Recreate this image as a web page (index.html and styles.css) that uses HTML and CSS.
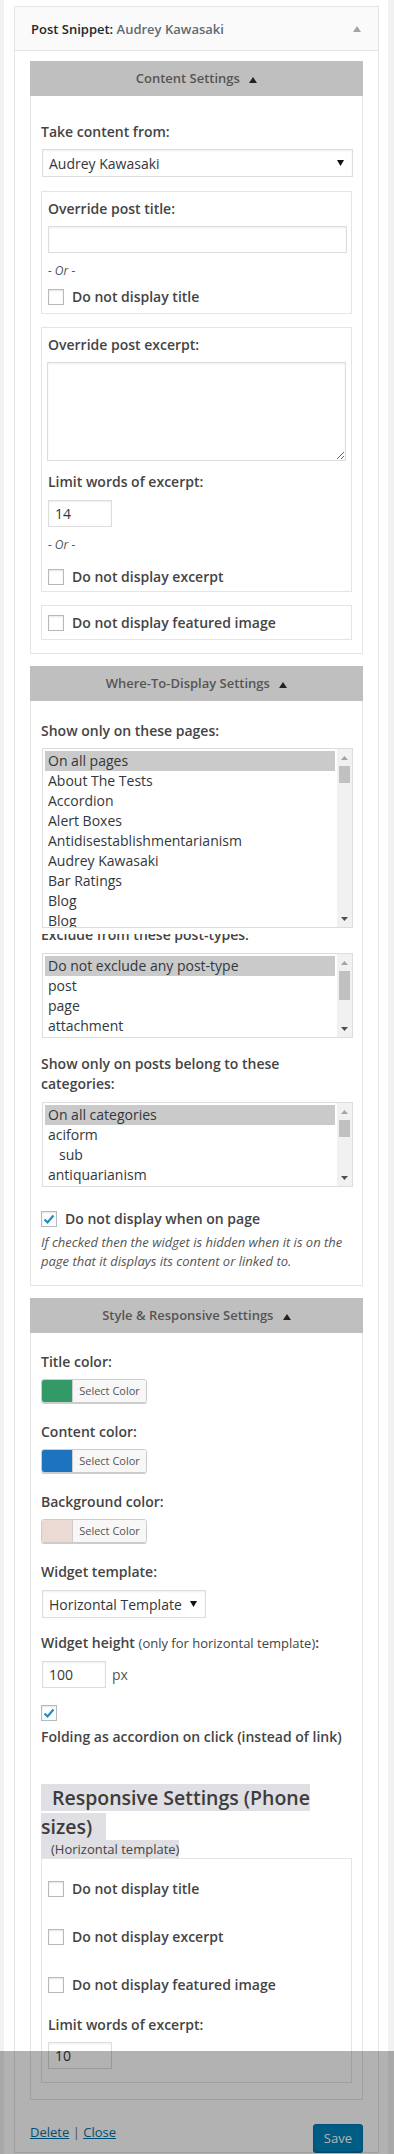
FILE: index.html
```html
<!DOCTYPE html>
<html lang="en">
<head>
    <meta charset="UTF-8">
    <meta name="viewport" content="width=device-width, initial-scale=1.0">
    <title>Post Snippet widget</title>
    <link rel="stylesheet" href="styles.css">
</head>
<body>

<div class="sidebar">
    <div class="widget">
        <div class="widget-top">
            <h3 class="widget-title">Post Snippet: <span class="in-title">Audrey Kawasaki</span></h3>
            <svg class="toggle" width="8" height="6" viewBox="0 0 8 6"><path d="M4 0 L8 6 L0 6 Z"/></svg>
        </div>

        <div class="widget-inside">

            <!-- content settings -->
            <div class="section">
                <div class="section-head">Content Settings <svg class="head-arrow" width="8" height="6" viewBox="0 0 8 6"><path d="M4 0 L8 6 L0 6 Z"/></svg></div>
                <div class="section-body content-body">
                    <label class="lbl">Take content from:</label>
                    <div class="dropdown dropdown-full">
                        <span>Audrey Kawasaki</span>
                        <svg width="7" height="6" viewBox="0 0 7 6"><path d="M0 0 L7 0 L3.5 6 Z"/></svg>
                    </div>

                    <div class="box box-title">
                        <label class="lbl">Override post title:</label>
                        <input type="text" class="txt txt-wide">
                        <div class="or">- Or -</div>
                        <div class="check-row">
                            <span class="check"></span>
                            <span class="lbl">Do not display title</span>
                        </div>
                    </div>

                    <div class="box box-excerpt">
                        <label class="lbl">Override post excerpt:</label>
                        <textarea class="area"></textarea>
                        <label class="lbl lbl-limit">Limit words of excerpt:</label>
                        <input type="text" class="txt txt-small" value="14">
                        <div class="or">- Or -</div>
                        <div class="check-row row-excerpt">
                            <span class="check"></span>
                            <span class="lbl">Do not display excerpt</span>
                        </div>
                    </div>

                    <div class="box box-image">
                        <div class="check-row">
                            <span class="check"></span>
                            <span class="lbl">Do not display featured image</span>
                        </div>
                    </div>
                </div>
            </div>

            <!-- where to display -->
            <div class="section">
                <div class="section-head">Where-To-Display Settings <svg class="head-arrow" width="8" height="6" viewBox="0 0 8 6"><path d="M4 0 L8 6 L0 6 Z"/></svg></div>
                <div class="section-body where-body">
                    <label class="lbl">Show only on these pages:</label>
                    <div class="listbox-wrap">
                        <div class="listbox list-pages">
                            <div class="options">
                                <div class="opt selected">On all pages</div>
                                <div class="opt">About The Tests</div>
                                <div class="opt">Accordion</div>
                                <div class="opt">Alert Boxes</div>
                                <div class="opt">Antidisestablishmentarianism</div>
                                <div class="opt">Audrey Kawasaki</div>
                                <div class="opt">Bar Ratings</div>
                                <div class="opt">Blog</div>
                                <div class="opt">Blog</div>
                            </div>
                            <div class="scrollbar">
                                <div class="sb-btn"><svg width="7" height="4" viewBox="0 0 7 4"><path class="up" d="M3.5 0 L7 4 L0 4 Z"/></svg></div>
                                <div class="sb-track"><div class="thumb thumb-short"></div></div>
                                <div class="sb-btn"><svg width="7" height="4" viewBox="0 0 7 4"><path class="down" d="M0 0 L7 0 L3.5 4 Z"/></svg></div>
                            </div>
                        </div>
                    </div>
                    <label class="lbl lbl-hidden">Exclude from these post-types:</label>
                    <div class="listbox list-short">
                        <div class="options">
                            <div class="opt selected">Do not exclude any post-type</div>
                            <div class="opt">post</div>
                            <div class="opt">page</div>
                            <div class="opt">attachment</div>
                        </div>
                        <div class="scrollbar">
                            <div class="sb-btn"><svg width="7" height="4" viewBox="0 0 7 4"><path class="up" d="M3.5 0 L7 4 L0 4 Z"/></svg></div>
                            <div class="sb-track"><div class="thumb thumb-long"></div></div>
                            <div class="sb-btn"><svg width="7" height="4" viewBox="0 0 7 4"><path class="down" d="M0 0 L7 0 L3.5 4 Z"/></svg></div>
                        </div>
                    </div>

                    <label class="lbl lbl-cats">Show only on posts belong to these categories:</label>
                    <div class="listbox list-short">
                        <div class="options">
                            <div class="opt selected">On all categories</div>
                            <div class="opt">aciform</div>
                            <div class="opt sub">sub</div>
                            <div class="opt">antiquarianism</div>
                        </div>
                        <div class="scrollbar">
                            <div class="sb-btn"><svg width="7" height="4" viewBox="0 0 7 4"><path class="up" d="M3.5 0 L7 4 L0 4 Z"/></svg></div>
                            <div class="sb-track"><div class="thumb thumb-short"></div></div>
                            <div class="sb-btn"><svg width="7" height="4" viewBox="0 0 7 4"><path class="down" d="M0 0 L7 0 L3.5 4 Z"/></svg></div>
                        </div>
                    </div>

                    <div class="check-row row-onpage">
                        <span class="check checked"><svg width="14" height="14" viewBox="0 0 14 14"><path d="M2.5 7.5 L5.5 10.5 L11.5 3.5"/></svg></span>
                        <span class="lbl">Do not display when on page</span>
                    </div>
                    <p class="help">If checked then the widget is hidden when it is on the page that it displays its content or linked to.</p>
                </div>
            </div>

            <!-- style & responsive -->
            <div class="section">
                <div class="section-head">Style &amp; Responsive Settings <svg class="head-arrow" width="8" height="6" viewBox="0 0 8 6"><path d="M4 0 L8 6 L0 6 Z"/></svg></div>
                <div class="section-body style-body">
                    <label class="lbl">Title color:</label>
                    <div class="picker"><span class="swatch" style="background:#339966"></span><span class="pick-text">Select Color</span></div>

                    <label class="lbl lbl-color">Content color:</label>
                    <div class="picker"><span class="swatch" style="background:#1e73be"></span><span class="pick-text">Select Color</span></div>

                    <label class="lbl lbl-color">Background color:</label>
                    <div class="picker"><span class="swatch" style="background:#ebdad4"></span><span class="pick-text">Select Color</span></div>

                    <label class="lbl lbl-color">Widget template:</label>
                    <div class="dropdown dropdown-template">
                        <span>Horizontal Template</span>
                        <svg width="7" height="6" viewBox="0 0 7 6"><path d="M0 0 L7 0 L3.5 6 Z"/></svg>
                    </div>

                    <label class="lbl lbl-height">Widget height <span class="normal">(only for horizontal template)</span>:</label>
                    <div class="px-row">
                        <input type="text" class="txt txt-small" value="100">
                        <span class="unit">px</span>
                    </div>

                    <span class="check checked check-fold"><svg width="14" height="14" viewBox="0 0 14 14"><path d="M2.5 7.5 L5.5 10.5 L11.5 3.5"/></svg></span>
                    <label class="lbl lbl-fold">Folding as accordion on click (instead of link)</label>

                    <div class="resp-head"><span>Responsive Settings (Phone sizes)</span></div>
                    <div class="resp-sub"><span>(Horizontal template)</span></div>

                    <div class="box box-resp">
                        <div class="check-row">
                            <span class="check"></span>
                            <span class="lbl">Do not display title</span>
                        </div>
                        <div class="check-row row-gap">
                            <span class="check"></span>
                            <span class="lbl">Do not display excerpt</span>
                        </div>
                        <div class="check-row row-gap">
                            <span class="check"></span>
                            <span class="lbl">Do not display featured image</span>
                        </div>
                        <label class="lbl lbl-limit2">Limit words of excerpt:</label>
                        <input type="text" class="txt txt-small" value="10">
                    </div>
                </div>
            </div>

            <div class="control-actions">
                <div class="links"><a href="#">Delete</a> <span class="sep">|</span> <a href="#">Close</a></div>
                <button type="button" class="save">Save</button>
            </div>
        </div>
    </div>
</div>

<div class="shade"></div>

</body>
</html>
```

FILE: styles.css
```css
body {
    margin: 0;
    background: #f1f1f1;
    font-family: "Open Sans", "Liberation Sans", sans-serif;
    font-size: 13px;
    color: #444;
}

.sidebar {
    margin-left: 4px;
    width: 384px;
    min-height: 2154px;
    box-sizing: border-box;
    padding: 6px 0 0 10px;
    background: #fff;
}

.widget {
    width: 365px;
    box-sizing: border-box;
    border: 1px solid #e5e5e5;
    background: #fff;
}

.widget-top {
    height: 43px;
    display: flex;
    align-items: center;
    justify-content: space-between;
    padding: 0 17px 0 16px;
    background: #fafafa;
    border-bottom: 1px solid #e5e5e5;
}

.widget-title {
    margin: 0;
    font-size: 13px;
    font-weight: 600;
    line-height: 20px;
    color: #23282d;
}

.in-title {
    color: #606a73;
}

.toggle path {
    fill: #a0a5aa;
}

.widget-inside {
    padding: 10px 15px 0;
}

.section {
    margin-bottom: 12px;
}

.section-head {
    height: 35px;
    line-height: 34px;
    text-align: center;
    background: #c0bfbf;
    font-weight: 600;
    color: #555;
}

.head-arrow {
    margin-left: 6px;
    vertical-align: 0;
}

.head-arrow path {
    fill: #222;
}

.section-body {
    border: 1px solid #e5e5e5;
    border-top: 0;
    padding: 0 10px;
}

.lbl {
    display: block;
    font-size: 14px;
    font-weight: 600;
    line-height: 20px;
    color: #444;
}

.normal {
    font-size: 13px;
    font-weight: 400;
}

/* content settings */
.content-body {
    padding-top: 26px;
    padding-bottom: 13px;
}

.dropdown {
    display: flex;
    align-items: center;
    justify-content: space-between;
    height: 28px;
    box-sizing: border-box;
    padding: 0 8px 0 6px;
    border: 1px solid #ddd;
    box-shadow: inset 0 1px 2px rgba(0, 0, 0, 0.07);
    background: #fff;
    font-size: 14px;
    color: #32373c;
}

.dropdown path {
    fill: #111;
}

.dropdown-full {
    width: 311px;
    margin: 7px 0 14px 1px;
}

.box {
    border: 1px solid #e5e5e5;
    padding: 7px 4px 6px 6px;
}

.box-excerpt {
    margin-top: 13px;
    padding-bottom: 4px;
}

.box-image {
    margin-top: 13px;
    padding-top: 7px;
    padding-bottom: 6px;
}

.txt {
    display: block;
    height: 27px;
    box-sizing: border-box;
    margin: 7px 0 0;
    padding: 0 6px;
    border: 1px solid #ddd;
    box-shadow: inset 0 1px 2px rgba(0, 0, 0, 0.07);
    font-family: "Open Sans", "Liberation Sans", sans-serif;
    font-size: 14px;
    color: #32373c;
    outline: none;
}

.txt-wide {
    width: 299px;
}

.txt-small {
    width: 64px;
    margin-top: 8px;
}

.area {
    display: block;
    width: 299px;
    height: 99px;
    box-sizing: border-box;
    margin: 7px 0 0 -1px;
    border: 1px solid #ddd;
    box-shadow: inset 0 1px 2px rgba(0, 0, 0, 0.07);
    resize: vertical;
}

.lbl-limit {
    margin-top: 11px;
}

.or {
    margin-top: 9px;
    font-size: 12px;
    font-style: italic;
    line-height: 18px;
    color: #555;
}

.check-row {
    display: flex;
    align-items: center;
    gap: 8px;
    height: 20px;
    margin-top: 7px;
}

.box-image .check-row,
.box-resp .check-row:first-child {
    margin-top: 0;
}

.row-excerpt {
    margin-top: 13px;
}

.check {
    display: inline-block;
    width: 16px;
    height: 16px;
    box-sizing: border-box;
    flex: none;
    border: 1px solid #b4b9be;
    background: #fff;
    box-shadow: inset 0 1px 2px rgba(0, 0, 0, 0.1);
}

.check svg {
    display: block;
    margin: 0;
}

.check path {
    fill: none;
    stroke: #1e8cbe;
    stroke-width: 2.2;
}

/* where to display */
.where-body {
    padding-top: 20px;
    padding-bottom: 14px;
}

.listbox-wrap {
    position: relative;
    z-index: 1;
    padding-bottom: 6px;
    background: #fff;
}

.listbox {
    display: flex;
    width: 311px;
    box-sizing: border-box;
    margin: 7px 0 0 1px;
    border: 1px solid #ddd;
    background: #fff;
    overflow: hidden;
}

.list-pages {
    height: 180px;
}

.list-short {
    height: 85px;
    margin-top: 8px;
}

.options {
    flex: 1;
    padding: 2px 2px 0 2px;
    overflow: hidden;
}

.opt {
    height: 20px;
    line-height: 20px;
    padding-left: 3px;
    font-size: 14px;
    color: #32373c;
    white-space: nowrap;
}

.opt.selected {
    background: #cacaca;
}

.opt.sub {
    padding-left: 14px;
}

.scrollbar {
    width: 15px;
    display: flex;
    flex-direction: column;
    background: #f1f1f1;
}

.sb-btn {
    height: 17px;
    display: flex;
    align-items: center;
    justify-content: center;
    flex: none;
}

.sb-track {
    flex: 1;
}

.thumb {
    margin: 0 2px;
    background: #c1c1c1;
}

.thumb-short {
    height: 17px;
}

.thumb-long {
    height: 29px;
}

.up {
    fill: #a3a3a3;
}

.down {
    fill: #505050;
}

.lbl-hidden {
    margin-top: -9px;
}

.lbl-cats {
    margin-top: 16px;
}

.row-onpage {
    margin-top: 22px;
}

.help {
    margin: 4px 0 0;
    font-style: italic;
    line-height: 19px;
    color: #555;
}

/* style & responsive */
.style-body {
    padding-top: 19px;
    padding-bottom: 16px;
}

.picker {
    display: flex;
    width: 106px;
    height: 24px;
    box-sizing: border-box;
    margin-top: 7px;
    border: 1px solid #ccc;
    border-radius: 3px;
    box-shadow: 0 1px 0 #ccc;
    overflow: hidden;
}

.swatch {
    width: 30px;
}

.pick-text {
    flex: 1;
    padding: 0 6px;
    border-left: 1px solid #ccc;
    background: #f7f7f7;
    font-size: 11px;
    line-height: 22px;
    color: #555;
    text-align: center;
}

.lbl-color {
    margin-top: 19px;
}

.dropdown-template {
    width: 164px;
    margin: 8px 0 0 1px;
}

.lbl-height {
    margin-top: 15px;
}

.px-row {
    display: flex;
    align-items: center;
    gap: 6px;
    margin-left: 1px;
}

.px-row .txt {
    margin-top: 8px;
}

.unit {
    margin-top: 8px;
    font-size: 14px;
    color: #555;
}

.check-fold {
    display: block;
    margin-top: 17px;
}

.lbl-fold {
    margin-top: 6px;
}

.resp-head {
    margin-top: 36px;
    font-size: 19.5px;
    font-weight: 600;
    line-height: 29px;
    color: #3c3c3c;
}

.resp-head span {
    padding: 0 14px 0 11px;
    background: #e0dfe3;
}

.resp-sub {
    font-size: 13px;
    line-height: 17px;
    color: #444;
}

.resp-sub span {
    padding-left: 10px;
    background: #e0dfe3;
}

.box-resp {
    padding-top: 20px;
    padding-bottom: 13px;
}

.row-gap {
    margin-top: 28px;
}

.lbl-limit2 {
    margin-top: 20px;
}

.box-resp .txt {
    margin-top: 7px;
}

.control-actions {
    display: flex;
    justify-content: space-between;
    align-items: flex-start;
    padding-top: 10px;
}

.links {
    line-height: 20px;
}

.links a {
    color: #0073aa;
}

.sep {
    color: #72777c;
}

.save {
    height: 28px;
    margin-top: 2px;
    padding: 0 10px 1px;
    border: 1px solid #0073aa;
    border-radius: 3px;
    background: #0085ba;
    box-shadow: 0 1px 0 #006799;
    font-family: "Open Sans", "Liberation Sans", sans-serif;
    font-size: 13px;
    color: #fff;
    cursor: pointer;
}

.shade {
    position: fixed;
    left: 0;
    right: 0;
    bottom: 0;
    height: 103px;
    background: rgba(0, 0, 0, 0.3);
}
```
